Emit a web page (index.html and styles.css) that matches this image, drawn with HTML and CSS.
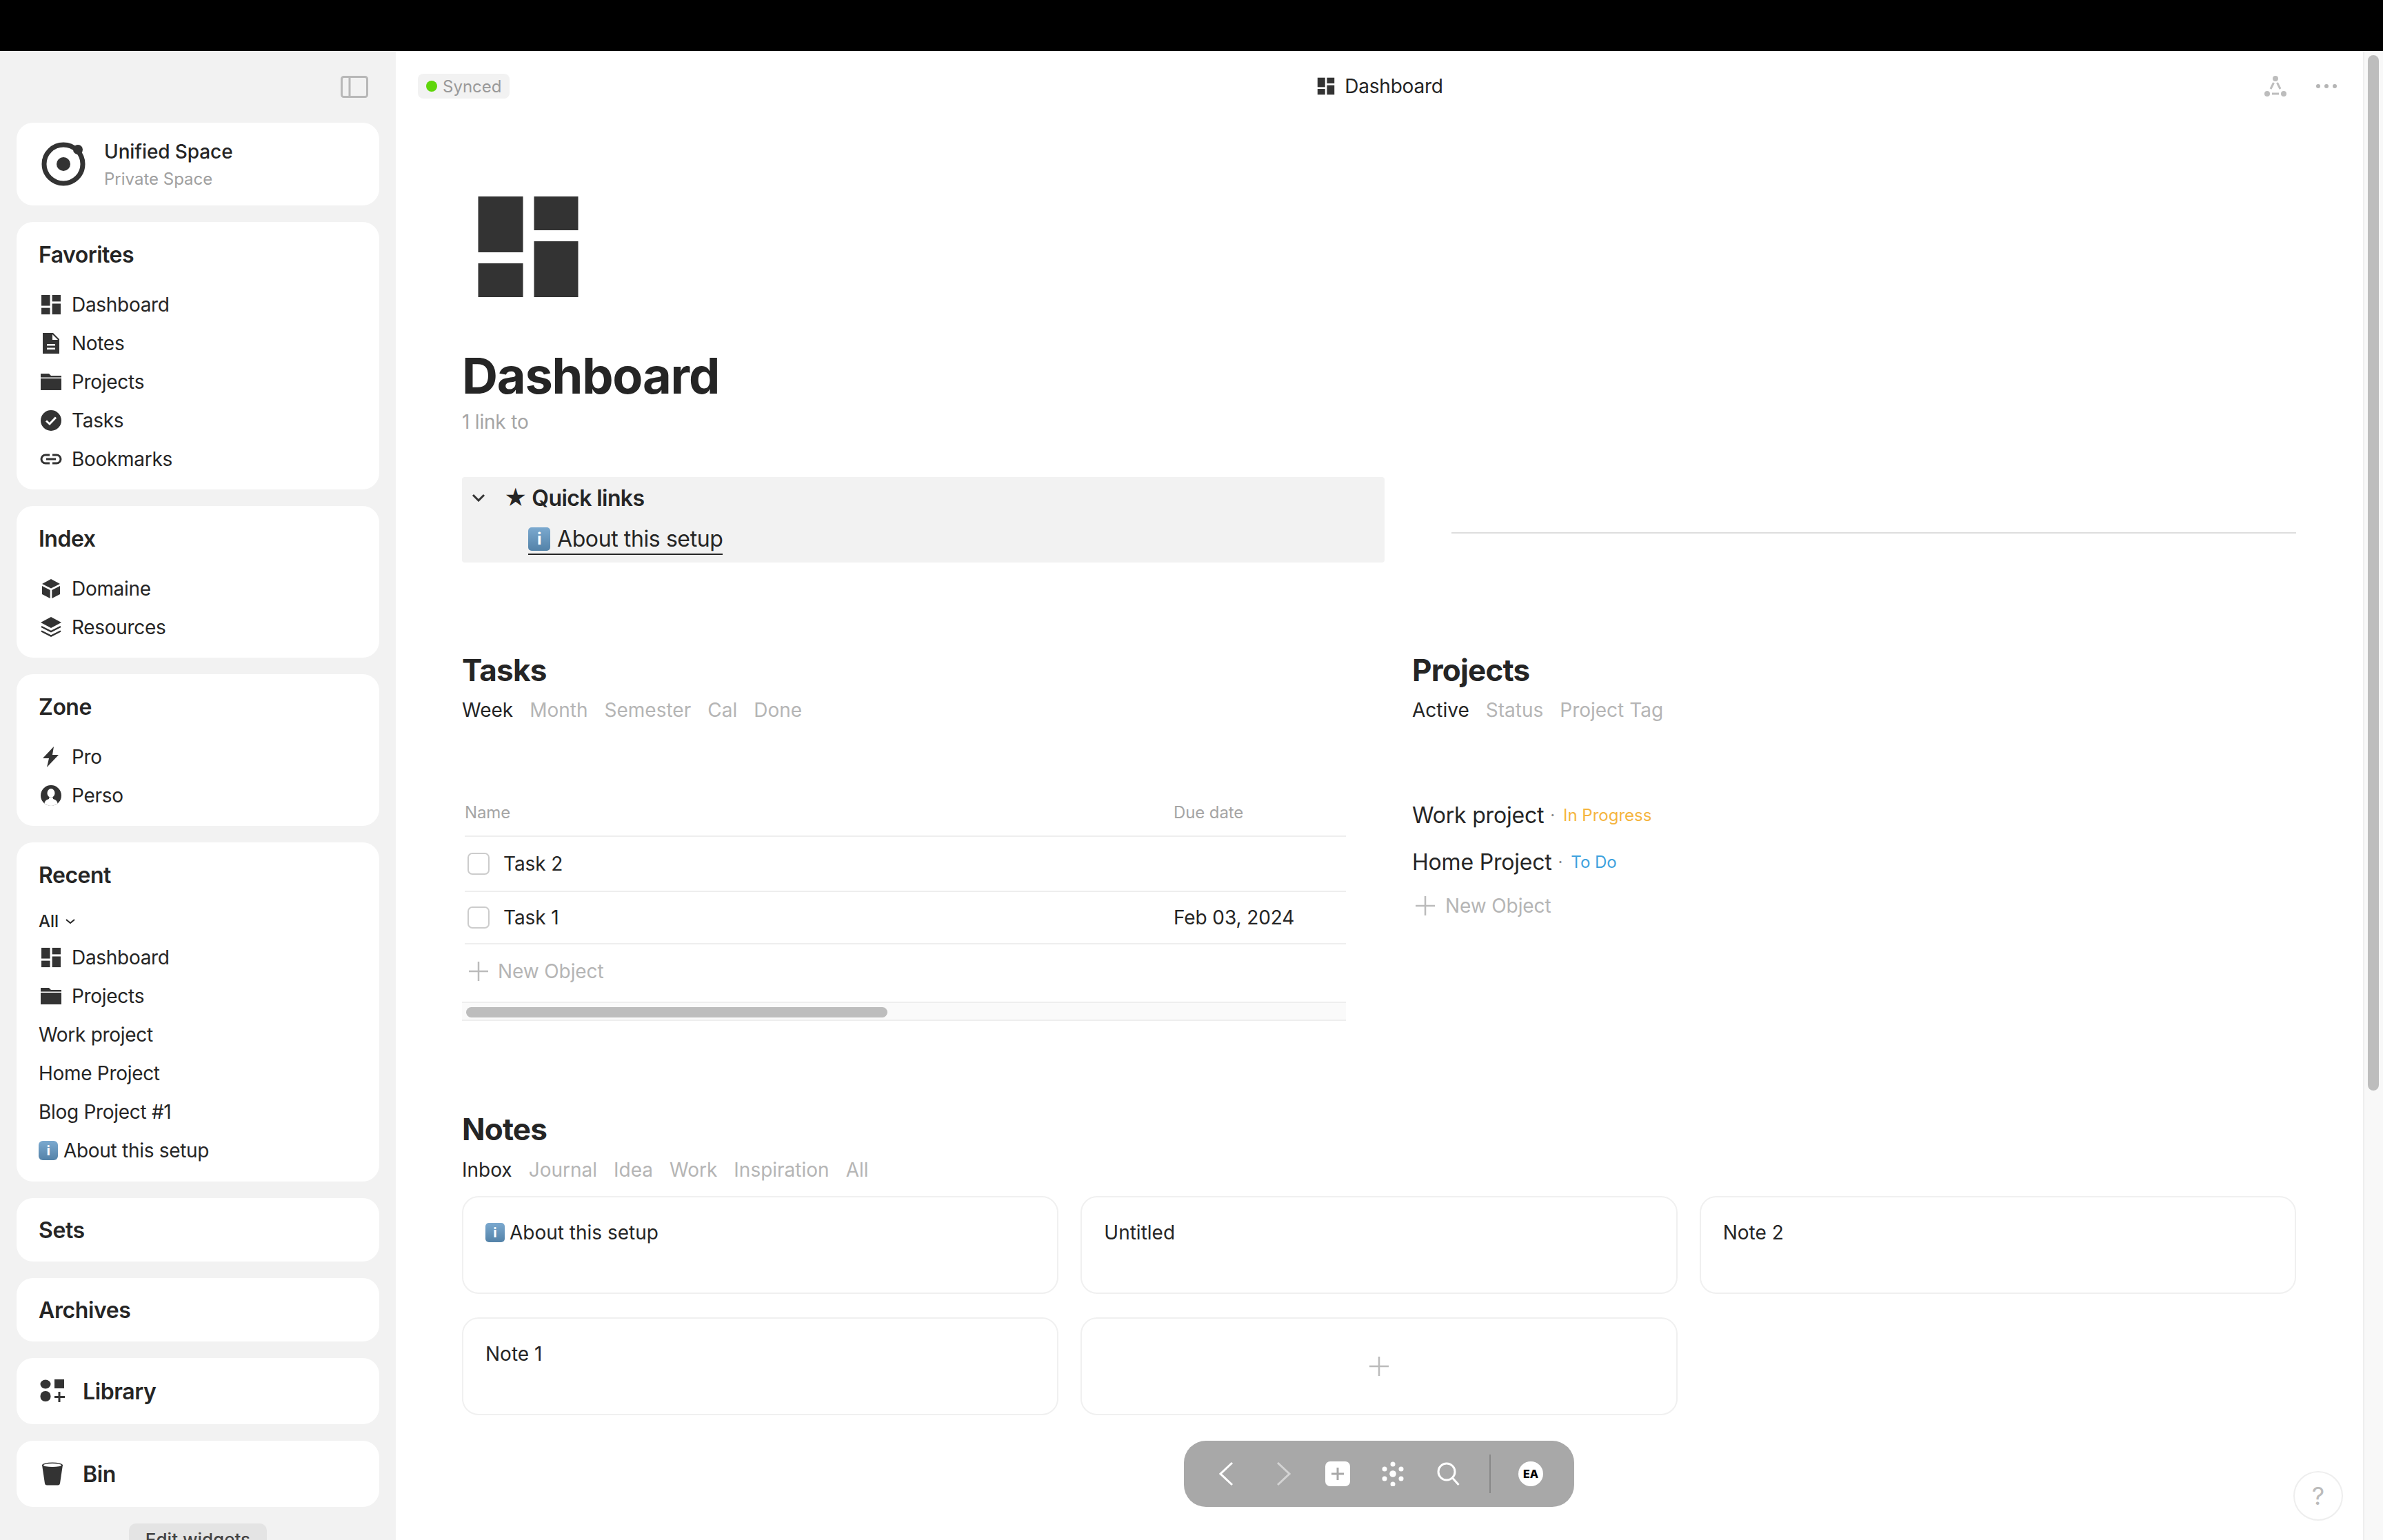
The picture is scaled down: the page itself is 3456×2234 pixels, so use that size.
FILE: index.html
```html
<!DOCTYPE html>
<html lang="en">
<head>
    <meta charset="UTF-8">
    <meta name="viewport" content="width=device-width, initial-scale=1.0">
    <title>Dashboard</title>
    <link rel="stylesheet" href="styles.css">
</head>
<body>
    <svg class="sprite" xmlns="http://www.w3.org/2000/svg">
        <symbol id="i-dash" viewBox="-10.5 -10 166 166">
            <rect x="0" y="0" width="65" height="81"/>
            <rect x="0" y="97" width="65" height="49"/>
            <rect x="81" y="0" width="64" height="49"/>
            <rect x="81" y="65" width="64" height="81"/>
        </symbol>
        <symbol id="i-note" viewBox="0 0 32 32">
            <path fill-rule="evenodd" d="M4 1h15l9 9v21H4zM18 3v8h8zM10 17v2.500h12V17zM10 22.500V25h12v-2.500z"/>
        </symbol>
        <symbol id="i-folder" viewBox="0 0 32 32">
            <path d="M1 4h12l3 3h15v2.500H1zM1 11h30v17H1z"/>
        </symbol>
        <symbol id="i-task" viewBox="0 0 32 32">
            <circle cx="16" cy="16" r="15"/>
            <path d="M9 16.500l5 4.500 9-9.500" fill="none" stroke="#fff" stroke-width="3"/>
        </symbol>
        <symbol id="i-link" viewBox="0 0 32 32">
            <path d="M14 10H8a6 6 0 0 0 0 12h6M18 10h6a6 6 0 0 1 0 12h-6M9 16h14" fill="none" stroke="#333" stroke-width="3"/>
        </symbol>
        <symbol id="i-cube" viewBox="0 0 32 32">
            <path d="M16 2l13 7-13 6.500L3 9zM3 12l11.700 6v12L3 24zM29 12l-11.700 6v12L29 24z"/>
        </symbol>
        <symbol id="i-layers" viewBox="0 0 32 32">
            <path d="M16 1l15 8-15 8L1 9z"/>
            <path d="M2 15l14 7 14-7M2 21.500l14 7 14-7" fill="none" stroke="#333" stroke-width="2.500"/>
        </symbol>
        <symbol id="i-bolt" viewBox="0 0 32 32">
            <path d="M20 1L4 18h9l-3 13 17-18h-9z"/>
        </symbol>
        <symbol id="i-person" viewBox="0 0 32 32">
            <circle cx="16" cy="16" r="15"/>
            <ellipse cx="16" cy="12.500" rx="5.500" ry="6.500" fill="#fff"/>
            <path d="M6.500 27.500c.5-4 3-5.500 6.500-6.500v-2h6v2c3.500 1 6 2.500 6.500 6.500a15 15 0 0 1-19 0z" fill="#fff"/>
        </symbol>
    </svg>

    <div class="topbar"></div>

    <div class="app">
        <aside class="sidebar">
            <div class="side-top">
                <svg class="panel-icon" viewBox="0 0 40 32"><rect x="1.500" y="1.500" width="37" height="29" rx="3"/><path d="M13 1.500v29"/></svg>
            </div>

            <div class="card space-card">
                <svg class="space-icon" viewBox="0 0 70 70">
                    <circle cx="35" cy="35" r="28" fill="none" stroke="#333" stroke-width="7"/>
                    <circle cx="35" cy="35" r="10" fill="#333"/>
                    <circle cx="56" cy="14" r="7" fill="#333"/>
                </svg>
                <div>
                    <div class="space-name">Unified Space</div>
                    <div class="space-type">Private Space</div>
                </div>
            </div>

            <div class="card">
                <div class="card-title">Favorites</div>
                <div class="item"><svg class="ico"><use href="#i-dash"/></svg>Dashboard</div>
                <div class="item"><svg class="ico"><use href="#i-note"/></svg>Notes</div>
                <div class="item"><svg class="ico"><use href="#i-folder"/></svg>Projects</div>
                <div class="item"><svg class="ico"><use href="#i-task"/></svg>Tasks</div>
                <div class="item"><svg class="ico"><use href="#i-link"/></svg>Bookmarks</div>
            </div>

            <div class="card">
                <div class="card-title">Index</div>
                <div class="item"><svg class="ico"><use href="#i-cube"/></svg>Domaine</div>
                <div class="item"><svg class="ico"><use href="#i-layers"/></svg>Resources</div>
            </div>

            <div class="card">
                <div class="card-title">Zone</div>
                <div class="item"><svg class="ico"><use href="#i-bolt"/></svg>Pro</div>
                <div class="item"><svg class="ico"><use href="#i-person"/></svg>Perso</div>
            </div>

            <div class="card card-recent">
                <div class="card-title">Recent</div>
                <div class="filter">All
                    <svg class="filter-chev" viewBox="0 0 14 8"><path d="M1 1l6 5 6-5"/></svg>
                </div>
                <div class="item"><svg class="ico"><use href="#i-dash"/></svg>Dashboard</div>
                <div class="item"><svg class="ico"><use href="#i-folder"/></svg>Projects</div>
                <div class="item plain">Work project</div>
                <div class="item plain">Home Project</div>
                <div class="item plain">Blog Project #1</div>
                <div class="item plain"><span class="info info-wide">i</span>About this setup</div>
            </div>

            <div class="card card-solo">Sets</div>
            <div class="card card-solo">Archives</div>
            <div class="card card-solo card-tall">
                <svg class="solo-icon" viewBox="0 0 36 36">
                    <ellipse cx="8" cy="8" rx="7.500" ry="6.500" fill="#333"/>
                    <rect x="21" y="1" width="14" height="13" fill="#333"/>
                    <rect x="0.500" y="18" width="15" height="15" rx="7" fill="#333"/>
                    <path d="M28 19v15M21 26.500h15" stroke="#333" stroke-width="3"/>
                </svg>
                Library
            </div>
            <div class="card card-solo card-tall">
                <svg class="solo-icon" viewBox="0 0 36 36">
                    <path d="M3 5h30l-4 27q-.5 2.500-3 2.500H10q-2.500 0-3-2.500z" fill="#333"/>
                    <ellipse cx="18" cy="5.500" rx="15" ry="4" fill="#333"/>
                    <ellipse cx="18" cy="5.500" rx="13" ry="2.500" fill="#fff"/>
                </svg>
                Bin
            </div>

            <div class="edit-row"><span class="edit-btn">Edit widgets</span></div>
        </aside>

        <main class="main">
            <header class="head">
                <div class="head-left">
                    <span class="synced"><i class="synced-dot"></i>Synced</span>
                </div>
                <div class="head-title"><svg class="head-ico"><use href="#i-dash"/></svg>Dashboard</div>
                <div class="head-right">
                    <svg class="graph-icon" viewBox="0 0 36 36">
                        <circle cx="18" cy="7" r="4"/>
                        <circle cx="6" cy="29" r="4"/>
                        <circle cx="30" cy="29" r="4"/>
                        <path d="M15.500 13l-4.500 9M20.500 13l4.500 9M13 29h10"/>
                    </svg>
                    <svg class="more-icon" viewBox="0 0 32 8"><circle cx="4" cy="4" r="3"/><circle cx="16" cy="4" r="3"/><circle cx="28" cy="4" r="3"/></svg>
                </div>
            </header>

            <div class="page">
                <svg class="page-icon"><use href="#i-dash"/></svg>
                <h1 class="page-title">Dashboard</h1>
                <div class="page-links">1 link to</div>

                <div class="quick-row">
                    <div class="quick">
                        <div class="quick-head">
                            <svg class="quick-chev" viewBox="0 0 20 12"><path d="M2 2l8 8 8-8"/></svg>
                            <span class="quick-title">★ Quick links</span>
                        </div>
                        <div class="quick-link"><a><span class="info info-big">i</span>About this setup</a></div>
                    </div>
                    <div class="quick-line"></div>
                </div>

                <div class="two-col">
                    <section>
                        <h2 class="sec-title">Tasks</h2>
                        <div class="tabs">
                            <span class="tab on">Week</span>
                            <span class="tab">Month</span>
                            <span class="tab">Semester</span>
                            <span class="tab">Cal</span>
                            <span class="tab">Done</span>
                        </div>
                        <div class="table">
                            <div class="row row-head"><span>Name</span><span class="col-date">Due date</span></div>
                            <div class="row row-task"><span class="task-name"><i class="check"></i>Task 2</span></div>
                            <div class="row row-task row-task-b"><span class="task-name"><i class="check"></i>Task 1</span><span class="col-date">Feb 03, 2024</span></div>
                            <div class="row-new"><svg class="plus" viewBox="0 0 28 28"><path d="M14 0v28M0 14h28"/></svg>New Object</div>
                        </div>
                        <div class="hscroll"><div class="hscroll-thumb"></div></div>
                    </section>

                    <section>
                        <h2 class="sec-title">Projects</h2>
                        <div class="tabs">
                            <span class="tab on">Active</span>
                            <span class="tab">Status</span>
                            <span class="tab">Project Tag</span>
                        </div>
                        <div class="plist">
                            <div class="pitem">Work project<span class="sep">·</span><span class="status orange">In Progress</span></div>
                            <div class="pitem">Home Project<span class="sep">·</span><span class="status blue">To Do</span></div>
                            <div class="pnew"><svg class="plus" viewBox="0 0 28 28"><path d="M14 0v28M0 14h28"/></svg>New Object</div>
                        </div>
                    </section>
                </div>

                <section class="notes">
                    <h2 class="sec-title">Notes</h2>
                    <div class="tabs">
                        <span class="tab on">Inbox</span>
                        <span class="tab">Journal</span>
                        <span class="tab">Idea</span>
                        <span class="tab">Work</span>
                        <span class="tab">Inspiration</span>
                        <span class="tab">All</span>
                    </div>
                    <div class="note-grid">
                        <div class="note"><span class="info">i</span>About this setup</div>
                        <div class="note">Untitled</div>
                        <div class="note">Note 2</div>
                        <div class="note">Note 1</div>
                        <div class="note note-add"><svg class="plus plus-note" viewBox="0 0 28 28"><path d="M14 0v28M0 14h28"/></svg></div>
                    </div>
                </section>
            </div>
        </main>

        <div class="vscroll"><div class="vscroll-thumb"></div></div>
    </div>

    <nav class="dock">
        <svg class="dock-ico" viewBox="0 0 36 36"><path d="M25 2L8 18l17 16" stroke="#fff"/></svg>
        <svg class="dock-ico dim" viewBox="0 0 36 36"><path d="M11 2l17 16-17 16" stroke="#fff"/></svg>
        <svg class="dock-ico" viewBox="0 0 36 36"><rect width="36" height="36" rx="7" fill="#fff"/><path d="M18 9v18M9 18h18" stroke="#a8a8a8" stroke-width="3"/></svg>
        <svg class="dock-ico" viewBox="0 0 36 36">
            <g fill="#fff">
                <circle cx="18" cy="18" r="4.800"/>
                <circle cx="18" cy="4" r="3.500"/><circle cx="18" cy="33" r="3.500"/>
                <circle cx="6" cy="11" r="3.500"/><circle cx="30" cy="11" r="3.500"/>
                <circle cx="6" cy="25" r="3.500"/><circle cx="30" cy="25" r="3.500"/>
            </g>
        </svg>
        <svg class="dock-ico" viewBox="0 0 36 36"><circle cx="16" cy="15" r="12" stroke="#fff"/><path d="M24.500 24l9 10" stroke="#fff"/></svg>
        <i class="dock-sep"></i>
        <span class="avatar">EA</span>
    </nav>

    <div class="help">?</div>
</body>
</html>
```

FILE: styles.css
```css
* {
    box-sizing: border-box;
}
html, body {
    margin: 0;
    height: 2234px;
    overflow: hidden;
}
body {
    font-family: Inter, "Noto Sans", sans-serif;
    font-size: 28px;
    color: #252525;
    background: #fff;
    position: relative;
}
.sprite {
    display: none;
}
.topbar {
    height: 74px;
    background: #000;
}
.app {
    display: flex;
    height: 2160px;
}

/* sidebar */
.sidebar {
    width: 574px;
    flex: none;
    background: #f2f2f2;
    padding: 0 24px;
    display: flex;
    flex-direction: column;
    gap: 24px;
    overflow: hidden;
}
.side-top {
    flex: none;
    height: 80px;
    display: flex;
    justify-content: flex-end;
    align-items: flex-start;
    padding: 36px 16px 0 0;
}
.panel-icon {
    width: 40px;
    height: 32px;
    fill: none;
    stroke: #b8b8b8;
    stroke-width: 3;
}
.card {
    flex: none;
    background: #fff;
    border-radius: 24px;
    padding: 24px 32px 16px;
}
.card-recent {
    padding-bottom: 17px;
}
.space-card {
    height: 120px;
    padding: 0 32px 0 26px;
    display: flex;
    align-items: center;
    gap: 24px;
}
.space-icon {
    width: 70px;
    height: 70px;
    flex: none;
    margin-left: 7px;
}
.space-name {
    font-weight: 500;
    line-height: 40px;
    letter-spacing: -.1px;
}
.space-type {
    font-size: 24px;
    color: #a0a0a0;
    line-height: 34px;
    margin-top: 3px;
}
.card-title {
    font-size: 32px;
    font-weight: 600;
    line-height: 48px;
    letter-spacing: -.5px;
    margin-bottom: 20px;
}
.item {
    height: 56px;
    display: flex;
    align-items: center;
    gap: 14px;
    white-space: nowrap;
    letter-spacing: -.3px;
}
.item.plain {
    gap: 8px;
}
.ico {
    width: 32px;
    height: 32px;
    margin-left: 2px;
    flex: none;
    fill: #333;
}
.filter {
    font-size: 24px;
    font-weight: 500;
    line-height: 36px;
    margin-top: 25px;
    margin-bottom: 6px;
    display: flex;
    align-items: center;
    gap: 10px;
}
.filter-chev {
    width: 14px;
    height: 8px;
    fill: none;
    stroke: #252525;
    stroke-width: 2;
}
.card-solo {
    height: 92px;
    padding: 0 32px;
    display: flex;
    align-items: center;
    font-size: 32px;
    font-weight: 600;
    letter-spacing: -.4px;
}
.card-tall {
    height: 96px;
    gap: 26px;
}
.solo-icon {
    width: 36px;
    height: 36px;
    flex: none;
    margin-left: 2px;
}
.edit-row {
    flex: none;
    display: flex;
    justify-content: center;
}
.edit-btn {
    width: 200px;
    height: 48px;
    border-radius: 10px;
    background: #e4e4e4;
    font-size: 26px;
    font-weight: 500;
    line-height: 48px;
    text-align: center;
    color: #444;
}

/* the blue info emoji, no emoji font here */
.info {
    display: inline-flex;
    align-items: center;
    justify-content: center;
    width: 28px;
    height: 28px;
    margin-right: 7px;
    border-radius: 5px;
    background: linear-gradient(#7ba9cf, #5382a8);
    color: #fff;
    font-size: 20px;
    font-weight: 700;
    line-height: 1;
    vertical-align: 3px;
}
.info-wide {
    margin: 0;
    border-radius: 6px;
}
.info-big {
    width: 32px;
    height: 34px;
    margin-right: 10px;
    font-size: 24px;
}

/* main column */
.main {
    flex: 1;
    min-width: 0;
}
.head {
    height: 102px;
    display: grid;
    grid-template-columns: 1fr auto 1fr;
    align-items: center;
    padding: 0 37px 0 32px;
}
.head-left {
    display: flex;
}
.synced {
    display: flex;
    align-items: center;
    gap: 8px;
    height: 36px;
    padding: 0 12px;
    background: #f2f2f2;
    border-radius: 8px;
    font-size: 24px;
    color: #999;
}
.synced-dot {
    width: 16px;
    height: 16px;
    border-radius: 50%;
    background: #5fd60a;
}
.head-title {
    display: flex;
    align-items: center;
    gap: 13px;
    padding-left: 6px;
    letter-spacing: -.2px;
}
.head-ico {
    width: 28px;
    height: 28px;
    fill: #333;
}
.head-right {
    display: flex;
    justify-content: flex-end;
    align-items: center;
    gap: 40px;
}
.graph-icon {
    width: 36px;
    height: 36px;
    fill: #bdbdbd;
    stroke: #bdbdbd;
    stroke-width: 0;
}
.graph-icon path {
    stroke-width: 3;
    fill: none;
}
.more-icon {
    width: 32px;
    height: 8px;
    fill: #b5b5b5;
}
.page {
    padding: 0 97px 0 96px;
}
.page-icon {
    display: block;
    width: 166px;
    height: 166px;
    margin: 99px 0 0 13px;
    fill: #333;
}
.page-title {
    margin: 60px 0 0;
    font-size: 72px;
    font-weight: 700;
    line-height: 88px;
    letter-spacing: -1.2px;
}
.page-links {
    margin-top: 3px;
    line-height: 40px;
    color: #a5a5a5;
    letter-spacing: -.2px;
}
.quick-row {
    display: flex;
    gap: 97px;
    margin-top: 60px;
}
.quick {
    width: 1338px;
    height: 124px;
    background: #f2f2f2;
    border-radius: 4px;
    font-size: 32px;
}
.quick-head {
    height: 60px;
    display: flex;
    align-items: center;
    padding-left: 14px;
}
.quick-chev {
    width: 20px;
    height: 12px;
    fill: none;
    stroke: #333;
    stroke-width: 3;
}
.quick-title {
    margin-left: 27px;
    font-weight: 600;
    letter-spacing: -.6px;
}
.quick-link {
    padding-left: 96px;
    line-height: 60px;
    letter-spacing: -.4px;
}
.quick-link a {
    border-bottom: 2px solid #252525;
    padding-bottom: 2px;
}
.quick-line {
    flex: 1;
    height: 2px;
    margin-top: 80px;
    background: #ddd;
}

.two-col {
    display: grid;
    grid-template-columns: 1282px 1282px;
    gap: 96px;
    margin-top: 128px;
}
.sec-title {
    margin: 0;
    font-size: 44px;
    font-weight: 700;
    line-height: 56px;
    letter-spacing: -.8px;
}
.tabs {
    display: flex;
    gap: 24px;
    margin-top: 10px;
    line-height: 40px;
    color: #b5b5b5;
}
.tab.on {
    color: #252525;
}
.table {
    margin: 94px 0 0 4px;
}
.row {
    display: grid;
    grid-template-columns: 1028px 1fr;
    align-items: center;
    border-bottom: 2px solid #eee;
    letter-spacing: -.1px;
}
.row-head {
    height: 70px;
    font-size: 24px;
    color: #a5a5a5;
}
.row-task {
    height: 80px;
}
.row-task-b {
    height: 76px;
}
.col-date {
    grid-column: 2;
}
.task-name {
    display: flex;
    align-items: center;
    gap: 20px;
    padding-left: 4px;
}
.check {
    width: 32px;
    height: 32px;
    border: 2px solid #ccc;
    border-radius: 7px;
}
.row-new {
    height: 83px;
    padding: 0 0 6px 6px;
    display: flex;
    align-items: center;
    gap: 14px;
    letter-spacing: -.1px;
    color: #b5b5b5;
}
.plus {
    width: 28px;
    height: 28px;
    flex: none;
    stroke: #bbb;
    stroke-width: 2.500;
    fill: none;
}
.hscroll {
    height: 28px;
    padding: 6px 0 0 6px;
    background: #fafafa;
    border-top: 2px solid #eee;
    border-bottom: 2px solid #eee;
}
.hscroll-thumb {
    width: 611px;
    height: 15px;
    border-radius: 8px;
    background: #bdbdbd;
}
.plist {
    margin-top: 98px;
    font-size: 32px;
    letter-spacing: -.2px;
}
.pitem {
    height: 68px;
    display: flex;
    align-items: center;
}
.sep {
    margin: 0 12px 0 9px;
    color: #888;
    font-size: 24px;
}
.status {
    font-size: 24px;
    letter-spacing: 0;
}
.orange {
    color: #f5b53f;
}
.blue {
    color: #3ea2de;
}
.pnew {
    height: 60px;
    display: flex;
    align-items: center;
    gap: 15px;
    padding-left: 5px;
    font-size: 28px;
    letter-spacing: -.1px;
    color: #b5b5b5;
}
.notes {
    margin-top: 129px;
}
.notes .tabs {
    margin-top: 11px;
}
.note-grid {
    display: grid;
    grid-template-columns: repeat(3, 1fr);
    gap: 34px 32px;
    margin-top: 18px;
}
.note {
    height: 142px;
    padding: 32px;
    border: 2px solid #f0f0f0;
    border-radius: 24px;
    line-height: 38px;
}
.note-add {
    display: flex;
    align-items: center;
    justify-content: center;
    padding: 0;
}
.plus-note {
    width: 28px;
    height: 28px;
}

/* right page scrollbar */
.vscroll {
    width: 29px;
    flex: none;
    padding: 6px 6px 0 5px;
    background: #f8f8f8;
    border-left: 2px solid #eee;
}
.vscroll-thumb {
    width: 16px;
    height: 1502px;
    border-radius: 8px;
    background: #bdbdbd;
}

/* floating things */
.dock {
    position: absolute;
    left: 1717px;
    top: 2090px;
    width: 566px;
    height: 96px;
    border-radius: 32px;
    background: #a8a8a8;
    display: flex;
    align-items: center;
    padding-left: 45px;
}
.dock-ico {
    width: 36px;
    height: 36px;
    flex: none;
    margin-right: 44px;
    fill: none;
    stroke-width: 3;
}
.dim {
    opacity: .5;
}
.dock-sep {
    width: 2px;
    height: 56px;
    background: #888;
    margin-left: -2px;
}
.avatar {
    width: 36px;
    height: 36px;
    margin-left: 40px;
    border-radius: 50%;
    background: #fff;
    color: #000;
    font-size: 16px;
    font-weight: 800;
    text-align: center;
    line-height: 36px;
}
.help {
    position: absolute;
    left: 3326px;
    top: 2134px;
    width: 72px;
    height: 72px;
    border: 2px solid #eee;
    border-radius: 50%;
    background: #fff;
    color: #bbb;
    font-size: 36px;
    text-align: center;
    line-height: 68px;
}
```
